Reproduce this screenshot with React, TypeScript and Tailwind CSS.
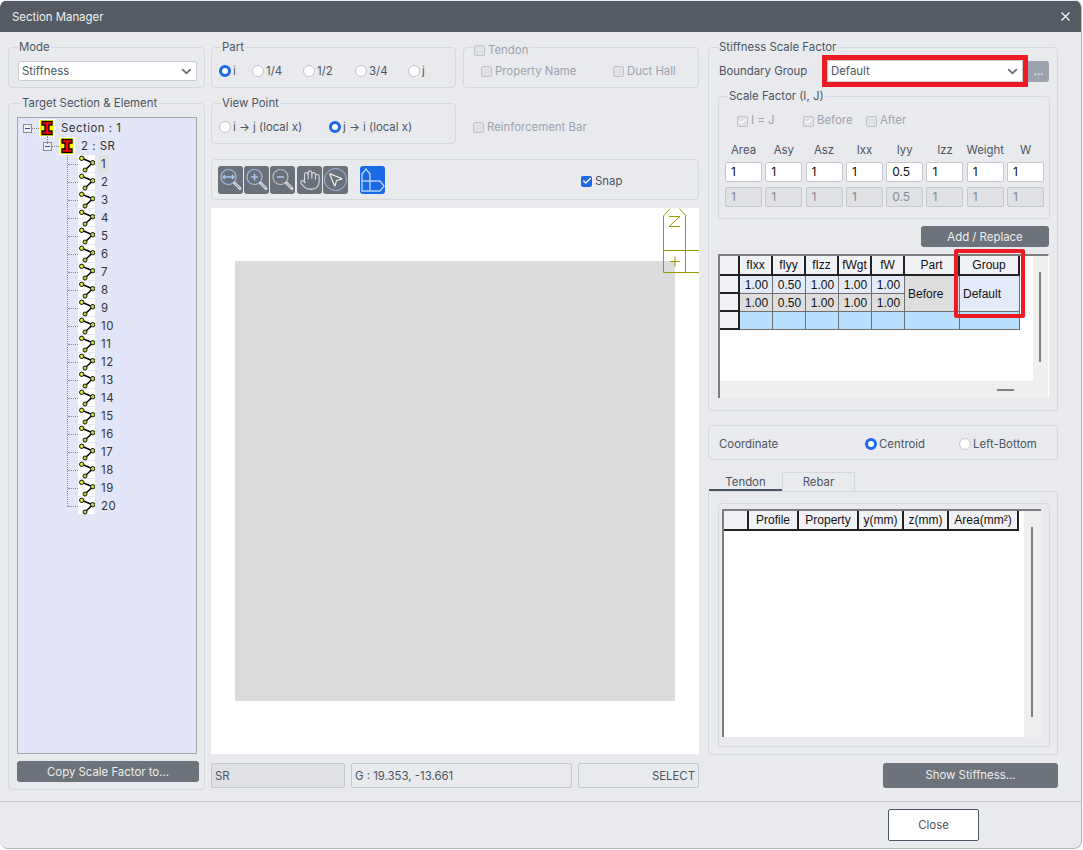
import React from "react";
import { X, ChevronDown, Check, Hand, MousePointer2 } from "lucide-react";

const Box = ({ label, className = "", children, labelClass = "left-[9px] -top-[8px]" }: { label?: React.ReactNode; className?: string; children?: React.ReactNode; labelClass?: string }) => (
  <div className={`relative border border-[#d5d8dc] rounded-[4px] ${className}`}>
    {label && <span className={`absolute ${labelClass} bg-[#e9eaee] px-[1px] leading-[15px] text-[11.4px] text-[#4b5563] whitespace-nowrap`}>{label}</span>}
    {children}
  </div>
);

const Radio = ({ on, label, className = "" }: { on?: boolean; label: string; className?: string }) => (
  <span className={`flex items-center gap-[2px] text-[11.4px] text-[#4b5563] whitespace-nowrap ${className}`}>
    {on ? (
      <span className="w-[12px] h-[12px] rounded-full border-[3.5px] border-[#1a6ae8] bg-white shrink-0" />
    ) : (
      <span className="w-[12px] h-[12px] rounded-full border border-[#c2c5ca] bg-white shrink-0" />
    )}
    {label}
  </span>
);

const CheckBox = ({ state, label, className = "", gap = "gap-[3px]" }: { state: "on" | "off" | "disOn"; label: string; className?: string; gap?: string }) => (
  <span className={`flex items-center ${gap} text-[11.4px] whitespace-nowrap ${state === "on" ? "text-[#4b5563]" : "text-[#9ca3af]"} ${className}`}>
    {state === "on" ? (
      <span className="w-[11px] h-[11px] rounded-[2px] bg-[#1a6ae8] flex items-center justify-center shrink-0">
        <Check size={10} strokeWidth={3.5} color="#fff" />
      </span>
    ) : (
      <span className="w-[11px] h-[11px] rounded-[2px] border border-[#c0c3c9] bg-[#dfe1e5] flex items-center justify-center shrink-0">
        {state === "disOn" && <Check size={9} strokeWidth={3} color="#fff" />}
      </span>
    )}
    {label}
  </span>
);

const Select = ({ value, className = "" }: { value: string; className?: string }) => (
  <div className={`flex items-center justify-between bg-white border border-[#c9ccd1] rounded-[2px] pl-[3px] pr-[2px] text-[11.4px] text-[#4b5563] ${className}`}>
    <span className="mt-[2px]">{value}</span>
    <ChevronDown size={15} strokeWidth={3} color="#6b7280" />
  </div>
);

const DarkBtn = ({ children, className = "" }: { children: React.ReactNode; className?: string }) => (
  <div className={`flex items-center justify-center bg-[#6c737a] text-[#eceef0] text-[11.4px] rounded-[3px] ${className}`}>{children}</div>
);

const IBeam = () => (
  <svg width="16" height="18" viewBox="0 0 16 18" className="shrink-0">
    <rect width="16" height="18" fill="#fff" />
    <rect x="1" y="1" width="14" height="16" fill="#ffff00" />
    <path d="M3 2.5H13V6H10V12H13V15.5H3V12H6V6H3Z" fill="#ff0000" stroke="#000" strokeWidth="1.3" />
  </svg>
);

const ElemIcon = () => (
  <svg width="17" height="18" viewBox="0 0 17 18" className="shrink-0">
    <rect y="0" width="17" height="17" fill="#fff" />
    <path d="M3.7 3.3L14.7 7.7L7 15" fill="none" stroke="#000" strokeWidth="1.5" />
    <circle cx="3.7" cy="3.3" r="2.2" fill="#dde23a" stroke="#000" strokeWidth="0.9" />
    <circle cx="14.7" cy="7.7" r="2.2" fill="#b9d84a" stroke="#000" strokeWidth="0.9" />
    <circle cx="7" cy="15" r="2" fill="#b9d84a" stroke="#000" strokeWidth="0.9" />
  </svg>
);

const Minus = () => (
  <span className="w-[9px] h-[9px] border border-[#8a8f96] bg-[#eceef2] flex items-center justify-center shrink-0">
    <span className="w-[5px] h-[1px] bg-[#2a5bb0]" />
  </span>
);

const ToolBtn = ({ children, className = "" }: { children: React.ReactNode; className?: string }) => (
  <div className={`w-[25px] h-[28px] rounded-[3px] bg-[#6b7178] flex items-center justify-center ${className}`}>{children}</div>
);

const Mag = ({ kind }: { kind: "fit" | "plus" | "minus" }) => (
  <svg width="25" height="28" viewBox="0 0 25 28" fill="none">
    <circle cx="10.5" cy="11" r="7.5" stroke={kind === "minus" ? "#b9c0c8" : "#9dbdea"} strokeWidth="1.2" />
    <path d="M16.5 17L22 22.5" stroke="#e6e8ea" strokeWidth="2.8" strokeLinecap="round" />
    <path d="M17 17.5L21.5 22" stroke="#6b7178" strokeWidth="1" strokeLinecap="round" />
    {kind === "fit" && <path d="M5 11H16M7 9L5 11L7 13M14 9L16 11L14 13" stroke="#a8c6f0" strokeWidth="1.3" />}
    {kind === "plus" && <path d="M7 11H14M10.5 7.5V14.5" stroke="#a8c6f0" strokeWidth="1.6" />}
    {kind === "minus" && <path d="M7 11H14" stroke="#a8c6f0" strokeWidth="1.6" />}
  </svg>
);

const Cell = ({ children, className = "" }: { children?: React.ReactNode; className?: string }) => (
  <div className={`flex items-center justify-center border-r border-b border-[#6f6f6f] text-[12px] text-[#111] ${className}`}>{children}</div>
);
const Head = ({ children, className = "" }: { children?: React.ReactNode; className?: string }) => (
  <div className={`flex items-center justify-center bg-[#f1f2f6] border-r-2 border-b-2 border-[#222] text-[12px] text-[#111] ${className}`}>{children}</div>
);

const fields: [string, string][] = [["Area", "1"], ["Asy", "1"], ["Asz", "1"], ["Ixx", "1"], ["Iyy", "0.5"], ["Izz", "1"], ["Weight", "1"], ["W", "1"]];

export default function App() {
  const elems = Array.from({ length: 20 }, (_, i) => i + 1);
  const sans = { fontFamily: "Inter, 'Liberation Sans', sans-serif" };
  return (
    <div className="w-[1083px] h-[850px] bg-white overflow-hidden" style={sans}>
      <div className="w-[1082px] h-[849px] bg-[#e9eaee] rounded-[8px] overflow-hidden flex flex-col border-r border-b border-[#b5b8bd]">
        <div className="h-[31px] mt-[1px] bg-[#555b63] flex items-center justify-between pl-[12px] pr-[8px] shrink-0">
          <span className="text-[11.4px] text-[#eef0f2] pt-[2px]">Section Manager</span>
          <X size={15} color="#fff" strokeWidth={1.8} />
        </div>

        <div className="flex pl-[8px] pt-[15px] h-[770px] shrink-0 border-b border-[#c8cace]">
          {/* Left column */}
          <div className="w-[197px] flex flex-col">
            <Box label="Mode" className="h-[41px]">
              <Select value="Stiffness" className="absolute left-[9px] top-[13px] w-[179px] h-[20px]" />
            </Box>
            <Box label="Target Section & Element" labelClass="left-[12px] -top-[8px]" className="mt-[15px] h-[687px] pl-[8px] pt-[13px]">
              <div className="w-[180px] h-[637px] bg-[#e3e5f8] border border-[#a3a5ab] text-[11.4px] text-[#333] tracking-[0.5px] relative pt-[1px]">
                <div className="flex items-center h-[18px] pl-[5px]">
                  <Minus />
                  <span className="w-[7px] border-t border-dotted border-[#888]" />
                  <IBeam />
                  <span className="ml-[6px] mt-[2px]">Section : 1</span>
                </div>
                <div className="flex items-center h-[18px] pl-[25px]">
                  <Minus />
                  <span className="w-[7px] border-t border-dotted border-[#888]" />
                  <IBeam />
                  <span className="ml-[6px] mt-[2px]">2 : SR</span>
                </div>
                <span className="absolute left-[29px] top-[18px] h-[8px] border-l border-dotted border-[#888]" />
                <div className="ml-[49px] border-l border-dotted border-[#888] h-[351px]">
                  <div className="w-[130px]">
                    {elems.map((n) => (
                      <div key={n} className="flex items-center h-[18px]">
                        <span className="w-[10px] border-t border-dotted border-[#888]" />
                        <ElemIcon />
                        <span className={`ml-[3px] px-[3px] leading-[18px] ${n === 1 ? "bg-[#e2e2e2]" : ""}`}>{n}</span>
                      </div>
                    ))}
                  </div>
                </div>
              </div>
              <DarkBtn className="mt-[7px] w-[182px] h-[21px] pt-[2px]">Copy Scale Factor to...</DarkBtn>
            </Box>
          </div>

          {/* Middle column */}
          <div className="w-[488px] ml-[6px] flex flex-col">
            <div className="flex gap-[7px]">
              <Box label="Part" className="w-[245px] h-[41px] flex items-center pl-[7px] pt-[8px]">
                <Radio on label="i" className="w-[33px]" />
                <Radio label="1/4" className="w-[51px]" />
                <Radio label="1/2" className="w-[52px]" />
                <Radio label="3/4" className="w-[53px]" />
                <Radio label="j" />
              </Box>
              <Box
                label={<CheckBox state="off" label="Tendon" />}
                labelClass="left-[9px] -top-[5px]"
                className="w-[236px] h-[41px] flex items-center pl-[17px] pt-[8px]"
              >
                <CheckBox state="off" label="Property Name" className="w-[132px]" />
                <CheckBox state="off" label="Duct Hall" />
              </Box>
            </div>
            <div className="flex mt-[15px]">
              <Box label="View Point" className="w-[245px] h-[41px] flex items-center pl-[7px] pt-[8px]">
                <Radio label="i → j (local x)" className="w-[110px]" />
                <Radio on label="j → i (local x)" />
              </Box>
              <CheckBox state="off" label="Reinforcement Bar" className="ml-[17px] h-[41px] pt-[8px]" />
            </div>
            <Box className="mt-[15px] h-[41px] flex items-center pl-[6px] shrink-0">
              <ToolBtn><Mag kind="fit" /></ToolBtn>
              <ToolBtn className="ml-[1px]"><Mag kind="plus" /></ToolBtn>
              <ToolBtn className="ml-[1px]"><Mag kind="minus" /></ToolBtn>
              <ToolBtn className="ml-[2px]"><Hand size={22} color="#d6d9dc" strokeWidth={1.2} /></ToolBtn>
              <ToolBtn className="ml-[1px]">
                <span className="w-[23px] h-[23px] rounded-full border-[1.5px] border-[#9dbdea] flex items-center justify-center">
                  <MousePointer2 size={17} color="#eef0f2" strokeWidth={1.6} />
                </span>
              </ToolBtn>
              <div className="ml-[12px] w-[25px] h-[28px] rounded-[3px] bg-[#1a6ae8] flex items-center justify-center">
                <svg width="25" height="28" viewBox="0 0 25 28" fill="none">
                  <path d="M2 25V8L6 3L10 8V15H20L24 20L20 25ZM2 15H10M10 15V25" stroke="#b5d0f7" strokeWidth="1.4" />
                </svg>
              </div>
              <CheckBox state="on" label="Snap" className="ml-[196px] pt-[4px]" />
            </Box>
            <div className="relative mt-[8px] h-[546px] bg-white pl-[24px] pt-[53px] shrink-0 overflow-hidden">
              <div className="w-[440px] h-[440px] bg-[#dcdcdc]" />
              <svg width="36" height="66" viewBox="0 0 36 66" fill="none" className="absolute right-0 top-0">
                <path d="M0.5 8L7 0.5M23 8L16.5 0.5M0.5 8V64.5H36M22.5 8V64.5M0.5 42.5H36" stroke="#999900" />
                <path d="M6 8.5H17L6 18.5H17M7 53.5H17M12 48.5V58.5" stroke="#999900" />
              </svg>
            </div>
            <div className="flex gap-[6px] mt-[9px] h-[25px] text-[11.4px] text-[#4b5563]">
              <div className="w-[134px] bg-[#dfe1e5] border border-[#c5c8cd] rounded-[2px] flex items-center pl-[3px] pt-[2px]">SR</div>
              <div className="w-[221px] border border-[#c5c8cd] rounded-[2px] flex items-center pl-[3px] pt-[2px]">G : 19.353, -13.661</div>
              <div className="w-[121px] border border-[#c5c8cd] rounded-[2px] flex items-center justify-end pr-[3px] pt-[2px]">SELECT</div>
            </div>
          </div>

          {/* Right column */}
          <div className="w-[350px] ml-[9px] flex flex-col">
            <Box label="Stiffness Scale Factor" className="h-[364px] shrink-0">
              <div className="flex items-center mt-[7px] h-[32px] pl-[10px]">
                <span className="w-[103px] text-[11.4px] text-[#4b5563] pt-[2px]">Boundary Group</span>
                <div className="w-[206px] h-[32px] border-[5px] border-[#ed1c24]">
                  <Select value="Default" className="w-full h-full" />
                </div>
                <div className="w-[21px] h-[21px] bg-[#9ca3af] rounded-r-[3px] flex items-center justify-center text-[11px] text-white">...</div>
              </div>
              <Box label="Scale Factor (I, J)" labelClass="left-[9px] -top-[8px]" className="ml-[9px] mt-[9px] w-[332px] h-[123px]">
                <div className="flex items-center h-[14px] mt-[17px] pl-[18px]">
                  <CheckBox state="disOn" label="I = J" className="w-[66px]" />
                  <CheckBox state="disOn" label="Before" className="w-[63px]" />
                  <CheckBox state="off" label="After" />
                </div>
                <div className="ml-[6px] mt-[15px] grid grid-cols-[repeat(8,37px)] gap-x-[3.3px] text-[11.4px]">
                  {fields.map(([l]) => (
                    <div key={l} className="h-[16px] mb-[3px] flex items-center justify-center text-[#4b5563]">{l}</div>
                  ))}
                  {fields.map(([l, v]) => (
                    <div key={l} className="h-[20px] mb-[5px] bg-white border border-[#c5c8cd] rounded-[2px] flex items-center pl-[5px] text-[12px] text-[#111]">{v}</div>
                  ))}
                  {fields.map(([l, v]) => (
                    <div key={l} className="h-[20px] bg-[#dfe1e5] border border-[#c5c8cd] rounded-[2px] flex items-center pl-[5px] text-[12px] text-[#868c94]">{v}</div>
                  ))}
                </div>
              </Box>
              <DarkBtn className="mt-[7px] ml-[212px] w-[128px] h-[21px] pt-[2px]">Add / Replace</DarkBtn>
              <div className="relative ml-[9px] mt-[7px] w-[331px] h-[144px] bg-[#efefef] border-t-2 border-l-2 border-[#7d7d7d] border-r border-r-white" style={{ fontFamily: "'Liberation Sans', Arial, sans-serif" }}>
                <div className="w-[313px] h-[125px] bg-white">
                  <div className="grid grid-cols-[20px_33px_33px_33px_33px_33px_55px_60px] grid-rows-[20px_18px_18px_18px]">
                    <Head />
                    {["fIxx", "fIyy", "fIzz", "fWgt", "fW", "Part", "Group"].map((h) => <Head key={h}>{h}</Head>)}
                    <Head />
                    {["1.00", "0.50", "1.00", "1.00", "1.00"].map((v, i) => <Cell key={i} className="bg-[#e4ebf8] pl-[1px]">{v}</Cell>)}
                    <Cell className="row-span-2 bg-[#dedede] !justify-start pl-[3px]">Before</Cell>
                    <Cell className="row-span-2 bg-[#e4ebf8] !justify-start pl-[3px]">Default</Cell>
                    <Head />
                    {["1.00", "0.50", "1.00", "1.00", "1.00"].map((v, i) => <Cell key={i} className="bg-[#dedede] pl-[1px]">{v}</Cell>)}
                    <Head />
                    {[0, 1, 2, 3, 4, 5, 6].map((i) => <Cell key={i} className="bg-[#b9dffe]" />)}
                  </div>
                </div>
                <span className="absolute left-[319px] top-[16px] w-[2px] h-[90px] bg-[#808080]" />
                <span className="absolute left-[277px] top-[133px] w-[17px] h-[2px] bg-[#808080]" />
                <span className="absolute left-[234px] -top-[7px] w-[71px] h-[69px] border-[4px] border-[#ed1c24] rounded-[2px]" />
              </div>
            </Box>
            <Box className="mt-[14px] h-[35px] flex items-center pl-[10px] pt-[4px] shrink-0">
              <span className="w-[146px] text-[11.4px] text-[#4b5563]">Coordinate</span>
              <Radio on label="Centroid" className="w-[94px]" />
              <Radio label="Left-Bottom" />
            </Box>
            <div className="flex mt-[12px] ml-[1px] h-[19px] text-[11.4px] text-[#4b5563] shrink-0">
              <div className="w-[73px] border-b-2 border-[#4b5563] flex items-center justify-center pt-[5px]">Tendon</div>
              <div className="w-[73px] border-t border-l border-r border-[#d5d8dc] flex items-center justify-center pt-[2px]">Rebar</div>
            </div>
            <Box className="h-[264px] shrink-0 pl-[9px] pt-[11px]">
              <Box className="w-[332px] h-[244px] pl-[3px] pt-[5px]">
                <div className="relative w-[319px] h-[228px] bg-[#efefef] border-t-2 border-l-2 border-[#7d7d7d]" style={{ fontFamily: "'Liberation Sans', Arial, sans-serif" }}>
                  <div className="w-[300px] h-full bg-white">
                    <div className="flex h-[20px]">
                      <Head className="w-[25px]" />
                      <Head className="w-[50px]">Profile</Head>
                      <Head className="w-[60px]">Property</Head>
                      <Head className="w-[45px]">y(mm)</Head>
                      <Head className="w-[45px]">z(mm)</Head>
                      <Head className="w-[70px]">Area(mm²)</Head>
                    </div>
                  </div>
                  <span className="absolute left-[307px] top-[16px] w-[2px] h-[190px] bg-[#808080]" />
                </div>
              </Box>
            </Box>
            <DarkBtn className="mt-[8px] ml-[175px] w-[175px] h-[25px] shrink-0">Show Stiffness...</DarkBtn>
          </div>
        </div>

        <div className="flex-1 flex items-start pl-[888px] pt-[7px]">
          <div className="w-[91px] h-[32px] bg-white border border-[#4b5563] rounded-[2px] flex items-center justify-center text-[11.4px] text-[#4b5563] pt-[2px]">Close</div>
        </div>
      </div>
    </div>
  );
}
